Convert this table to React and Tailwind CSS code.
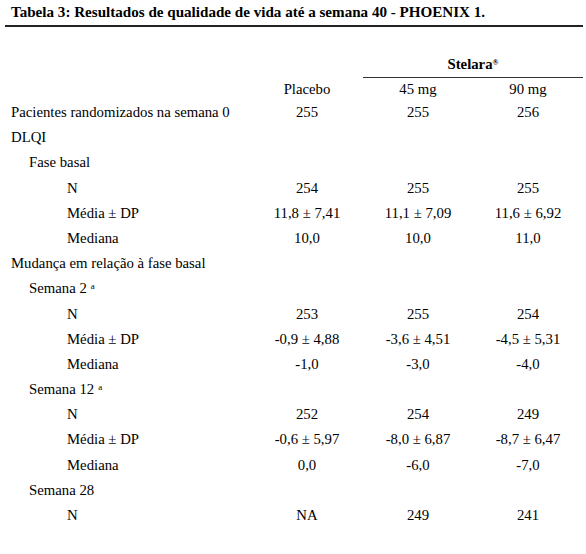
const rows = [
  { label: 'Pacientes randomizados na semana 0', level: 0, v: ['255', '255', '256'] },
  { label: 'DLQI', level: 0 },
  { label: 'Fase basal', level: 1 },
  { label: 'N', level: 2, v: ['254', '255', '255'] },
  { label: 'Média ± DP', level: 2, v: ['11,8 ± 7,41', '11,1 ± 7,09', '11,6 ± 6,92'] },
  { label: 'Mediana', level: 2, v: ['10,0', '10,0', '11,0'] },
  { label: 'Mudança em relação à fase basal', level: 0 },
  { label: 'Semana 2', sup: 'a', level: 1 },
  { label: 'N', level: 2, v: ['253', '255', '254'] },
  { label: 'Média ± DP', level: 2, v: ['-0,9 ± 4,88', '-3,6 ± 4,51', '-4,5 ± 5,31'] },
  { label: 'Mediana', level: 2, v: ['-1,0', '-3,0', '-4,0'] },
  { label: 'Semana 12', sup: 'a', level: 1 },
  { label: 'N', level: 2, v: ['252', '254', '249'] },
  { label: 'Média ± DP', level: 2, v: ['-0,6 ± 5,97', '-8,0 ± 6,87', '-8,7 ± 6,47'] },
  { label: 'Mediana', level: 2, v: ['0,0', '-6,0', '-7,0'] },
  { label: 'Semana 28', level: 1 },
  { label: 'N', level: 2, v: ['NA', '249', '241'] },
]

const indent = ['pl-[6px]', 'pl-[24px]', 'pl-[62px]']

function Row({ label, sup, level, v }) {
  return (
    <div className="flex h-[25.2px] items-center">
      <div className={`w-[246px] ${indent[level]}`}>
        {label}
        {sup && <sup className="ml-[4px] text-[9px]">{sup}</sup>}
      </div>
      {v && (
        <>
          <div className="w-[112px] text-center">{v[0]}</div>
          <div className="w-[110px] text-center">{v[1]}</div>
          <div className="w-[110px] text-center">{v[2]}</div>
        </>
      )}
    </div>
  )
}

export default function App() {
  return (
    <div className="w-[586px] h-[554px] bg-white text-black text-[14.75px] font-['Liberation_Serif',serif] pl-[5px] overflow-hidden">
      <div className="w-[578px]">
        <div className="h-[25px] leading-[25px] pl-[6px] font-bold text-[15.1px] whitespace-nowrap">
          Tabela 3: Resultados de qualidade de vida até a semana 40 - PHOENIX 1.
        </div>
        <div className="h-[1.5px] bg-[#222]" />
        <div className="flex h-[51.5px]">
          <div className="w-[358px]" />
          <div className="w-[220px] flex flex-col justify-end">
            <div className="text-center font-bold pb-[3px] leading-[20px]">
              Stelara<sup className="text-[8px] font-bold">®</sup>
            </div>
            <div className="h-[1.5px] bg-[#333]" />
          </div>
        </div>
        <div className="flex h-[21.5px] items-center">
          <div className="w-[246px]" />
          <div className="w-[112px] text-center">Placebo</div>
          <div className="w-[110px] text-center">45 mg</div>
          <div className="w-[110px] text-center">90 mg</div>
        </div>
        {rows.map((r, i) => (
          <Row key={i} {...r} />
        ))}
      </div>
    </div>
  )
}
